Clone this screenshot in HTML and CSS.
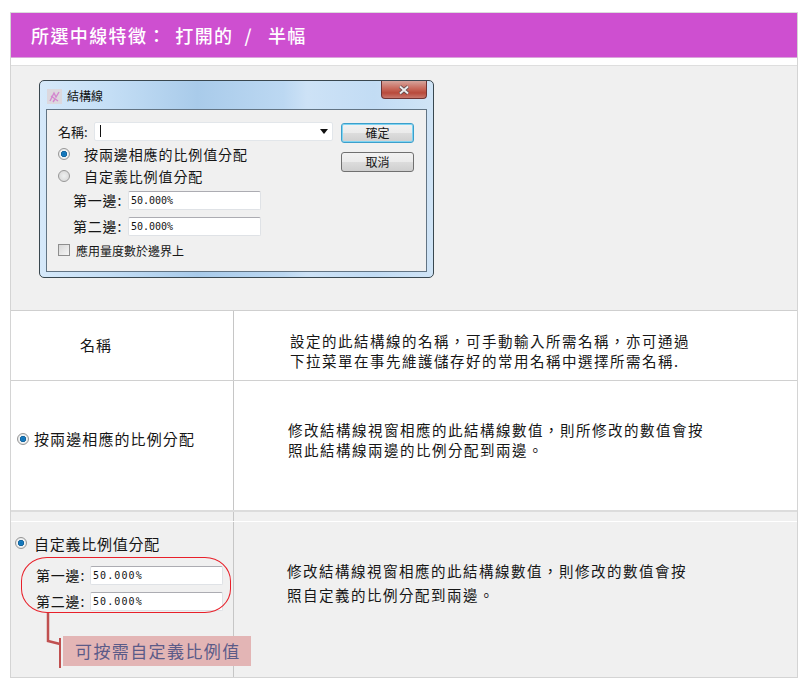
FILE: index.html
```html
<!DOCTYPE html>
<html lang="zh-Hant">
<head>
<meta charset="utf-8">
<title>所選中線特徵</title>
<link rel="stylesheet" href="styles.css">
</head>
<body>
<div class="sheet">
  <div class="banner">所選中線特徵<span class="p">&#xFF1A;</span> 打開的<span class="slash">/</span>半幅</div>
  <div class="strip"></div>
  <div class="shot">
    <div class="dialog">
      <div class="titlebar">
        <svg class="appicon" width="15" height="15" viewBox="0 0 15 15"><rect width="15" height="15" fill="#dcd8de"/><path d="M3 12 L7 4 L9 8 L12 3 M4 7 L11 12 M8 10 L6 13" stroke="#d487cf" stroke-width="1.4" fill="none"/></svg>
        <span class="dtitle">結構線</span>
        <span class="close"><svg width="14" height="10" viewBox="0 0 14 10"><path d="M3 1.5 L11 8.5 M11 1.5 L3 8.5" stroke="#55484c" stroke-width="3.6"/><path d="M3 1.5 L11 8.5 M11 1.5 L3 8.5" stroke="#eeeeee" stroke-width="2"/></svg></span>
      </div>
      <div class="dpanel">
        <div class="dform">
          <div class="namerow">
            <span class="namelabel">名稱:</span>
            <span class="combo"><span class="caret"></span><span class="arrow"></span></span>
          </div>
          <div class="opt first"><span class="radio on"></span><span>按兩邊相應的比例值分配</span></div>
          <div class="opt"><span class="radio"></span><span>自定義比例值分配</span></div>
          <div class="field f1"><span class="flabel">第一邊:</span><span class="input">50.000%</span></div>
          <div class="field f2"><span class="flabel">第二邊:</span><span class="input">50.000%</span></div>
          <div class="check"><span class="box"></span><span>應用量度數於邊界上</span></div>
        </div>
        <div class="dbtns">
          <span class="btn default">確定</span>
          <span class="btn">取消</span>
        </div>
      </div>
    </div>
  </div>
  <div class="row r1">
    <div class="cell-l name">名稱</div>
    <div class="cell-r"><p class="desc d1">設定的此結構線的名稱<span class="p">&#xFF0C;</span>可手動輸入所需名稱<span class="p">&#xFF0C;</span>亦可通過<br>下拉菜單在事先維護儲存好的常用名稱中選擇所需名稱.</p></div>
  </div>
  <div class="row r2">
    <div class="cell-l opt-cell"><span class="radio on"></span><span>按兩邊相應的比例分配</span></div>
    <div class="cell-r"><p class="desc d2">修改結構線視窗相應的此結構線數值<span class="p">&#xFF0C;</span>則所修改的數值會按<br>照此結構線兩邊的比例分配到兩邊<span class="p">&#x3002;</span></p></div>
  </div>
  <div class="row band"><div class="cell-l"></div><div class="cell-r"></div></div>
  <div class="row r3">
    <div class="cell-l custom">
      <div class="opt-line"><span class="radio on"></span><span>自定義比例值分配</span></div>
      <div class="field g1"><span class="glabel">第一邊:</span><span class="input">50.000%</span></div>
      <div class="field g2"><span class="glabel">第二邊:</span><span class="input">50.000%</span></div>
    </div>
    <div class="cell-r"><p class="desc d3">修改結構線視窗相應的此結構線數值<span class="p">&#xFF0C;</span>則修改的數值會按<br>照自定義的比例分配到兩邊<span class="p">&#x3002;</span></p></div>
    <div class="ring"></div>
    <svg class="leader" width="20" height="56" viewBox="0 0 20 56"><path d="M2 0 V28 L14 31" fill="none" stroke="#c05050" stroke-width="2.5"/><path d="M14 25 V55" stroke="#c05050" stroke-width="2" fill="none"/></svg>
    <div class="note">可按需自定義比例值</div>
  </div>
</div>
</body>
</html>
```
FILE: styles.css
```css
html, body { margin: 0; padding: 0; background: #fff; }
body {
  padding: 12px 0 0 10px;
  font-family: "Noto Sans CJK TC", "Liberation Sans", sans-serif;
  color: #161616;
}
.p { font-family: "Noto Sans CJK SC", sans-serif; }
.sheet {
  width: 788px;
  height: 666px;
  box-sizing: border-box;
  border: 1px solid #d4d4d4;
  border-top-color: #dcdcdc;
  overflow: hidden;
}
.banner {
  height: 45px;
  box-sizing: border-box;
  background: #ce4fd0;
  border-bottom: 1px solid #d9a6da;
  color: #fff;
  font-size: 18px;
  font-weight: 500;
  line-height: 44px;
  letter-spacing: 1.4px;
  padding-left: 20px;
  word-spacing: 3px;
}
.slash { margin: 0 15px 0 11px; }
.strip { height: 7px; background: #fff; border-bottom: 1px solid #dedede; }
.shot {
  height: 245px;
  box-sizing: border-box;
  background: #f0f0f0;
  padding: 14px 0 0 28px;
  border-bottom: 1px solid #cfcfcf;
}

.dialog {
  width: 395px;
  height: 198px;
  box-sizing: border-box;
  border: 1px solid #39474f;
  border-radius: 5px;
  padding: 0 6px 6px;
  background:
    linear-gradient(90deg, #d6e9fa 0%, #c4def5 18%, #a9cbea 40%, #bcd8f2 62%, #cde2f6 68%, #c2dcf4 85%, #d0e4f6 100%);
}
.titlebar { height: 28px; display: flex; align-items: center; position: relative; padding-left: 1px; }
.appicon { margin-top: 2px; }
.dtitle { font-size: 12px; margin-left: 5px; margin-top: 0; color: #111; }
.close {
  position: absolute;
  right: 0;
  top: 0;
  width: 46px;
  height: 18px;
  box-sizing: border-box;
  border: 1px solid #6e3434;
  border-top: 0;
  border-radius: 0 0 4px 4px;
  background: linear-gradient(#d6a49c 0%, #c8685a 45%, #b84a3c 70%, #c8776c 100%);
  display: flex;
  align-items: center;
  justify-content: center;
}
.dpanel {
  height: 163px;
  box-sizing: border-box;
  background: #f0f0f0;
  border: 1px solid #627484;
  display: flex;
  padding: 11px 0 0 11px;
  font-size: 14px;
}
.dform { width: 275px; }
.namerow { display: flex; align-items: center; height: 20px; }
.namelabel { width: 36px; font-size: 13px; flex: none; }
.combo {
  flex: 1;
  height: 19px;
  box-sizing: border-box;
  background: #fff;
  border: 1px solid #e2e6ea;
  border-radius: 2px;
  display: flex;
  align-items: center;
  justify-content: space-between;
  padding: 0 4px 0 5px;
}
.caret { width: 1px; height: 12px; background: #111; }
.arrow { width: 0; height: 0; border: 4px solid transparent; border-top: 5px solid #111; border-bottom: 0; }
.opt { height: 22px; display: flex; align-items: center; letter-spacing: 0.9px; }
.opt.first { margin-top: 2px; }
.opt .radio { margin-right: 14px; }
.radio {
  flex: none;
  display: inline-block;
  width: 12px;
  height: 12px;
  box-sizing: border-box;
  border-radius: 50%;
  border: 1px solid #979797;
  background: radial-gradient(circle, #eef0f0 0, #dcdcdc 70%, #f4f4f4 100%);
}
.radio.on { background: radial-gradient(circle at 50% 50%, #0c6db0 0, #1b7fc4 26%, #0d5c94 40%, #f2f4f5 48%, #d8d8d8 100%); }
.field { display: flex; align-items: center; height: 20px; }
.flabel { width: 54px; padding-left: 15px; flex: none; letter-spacing: 0.8px; box-sizing: content-box; margin-right: 1px; }
.input {
  width: 133px;
  height: 19px;
  box-sizing: border-box;
  background: #fff;
  border: 1px solid #dfe2e6;
  border-top-color: #acacb2;
  border-radius: 2px;
  font-family: "DejaVu Sans Mono", monospace;
  font-size: 10px;
  line-height: 17px;
  padding-left: 2px;
  color: #111;
}
.f1 { margin-top: 3px; }
.f2 { margin-top: 6px; }
.check { display: flex; align-items: center; height: 20px; margin-top: 4px; font-size: 12px; }
.box {
  width: 12px;
  height: 12px;
  box-sizing: border-box;
  border: 1px solid #8e8e8e;
  background: linear-gradient(135deg, #d8d8d8, #f6f6f6);
  margin-right: 6px;
}
.dbtns { margin-left: 8px; padding-top: 2px; display: flex; flex-direction: column; gap: 9px; }
.btn {
  width: 73px;
  height: 20px;
  box-sizing: border-box;
  border: 1px solid #707070;
  border-radius: 3px;
  background: linear-gradient(#f2f2f2 0, #ebebeb 48%, #dcdcdc 52%, #cfcfcf 100%);
  font-size: 12px;
  line-height: 17px;
  text-align: center;
}
.btn.default { border: 1px solid #3c9fcb; box-shadow: inset 0 0 0 1px #7fd4f2; }

.row { display: grid; grid-template-columns: 223px 1fr; font-size: 15px; letter-spacing: 1.1px; }
.cell-l { border-right: 1px solid #c6c6c6; box-sizing: border-box; }
.r1 { height: 69px; border-bottom: 1px solid #d0d0d0; background: #fff; }
.r2 { height: 129px; background: #fff; }
.name { display: flex; align-items: center; padding: 0 0 2px 69px; }
.desc { margin: 0; font-size: 14.5px; letter-spacing: 1.5px; font-weight: 400; white-space: nowrap; }
.d1 { padding: 20px 0 0 56px; line-height: 20px; }
.d2 { padding: 39px 0 0 54px; line-height: 20px; }
.d3 { padding: 37px 0 0 53px; line-height: 24px; }
.opt-cell { display: flex; align-items: center; padding: 0 0 14px 6px; gap: 5px; }
.band { background: #f0f0f0; border-top: 2px solid #dcdcdc; border-bottom: 1px solid #fff; box-sizing: border-box; height: 12px; }
.r3 { height: 155px; background: #f0f0f0; position: relative; }
.custom { padding: 11px 0 0 4px; }
.opt-line { display: flex; align-items: center; height: 20px; gap: 7px; letter-spacing: 0.75px; }
.custom .field { font-size: 14px; }
.g1 { margin-top: 12px; }
.g2 { margin-top: 6px; }
.glabel { width: 54px; padding-left: 21px; flex: none; letter-spacing: 0.8px; }
.ring {
  position: absolute;
  left: 10px;
  top: 35px;
  width: 210px;
  height: 56px;
  box-sizing: border-box;
  border: 1px solid #e8202a;
  border-radius: 26px / 24px;
}
.leader { position: absolute; left: 35px; top: 91px; }
.note {
  position: absolute;
  left: 52px;
  top: 114px;
  width: 188px;
  height: 30px;
  background: #e3b5b5;
  color: #5b5b88;
  font-size: 17px;
  line-height: 30px;
  letter-spacing: 1.4px;
  padding-left: 12px;
  box-sizing: border-box;
}
```
